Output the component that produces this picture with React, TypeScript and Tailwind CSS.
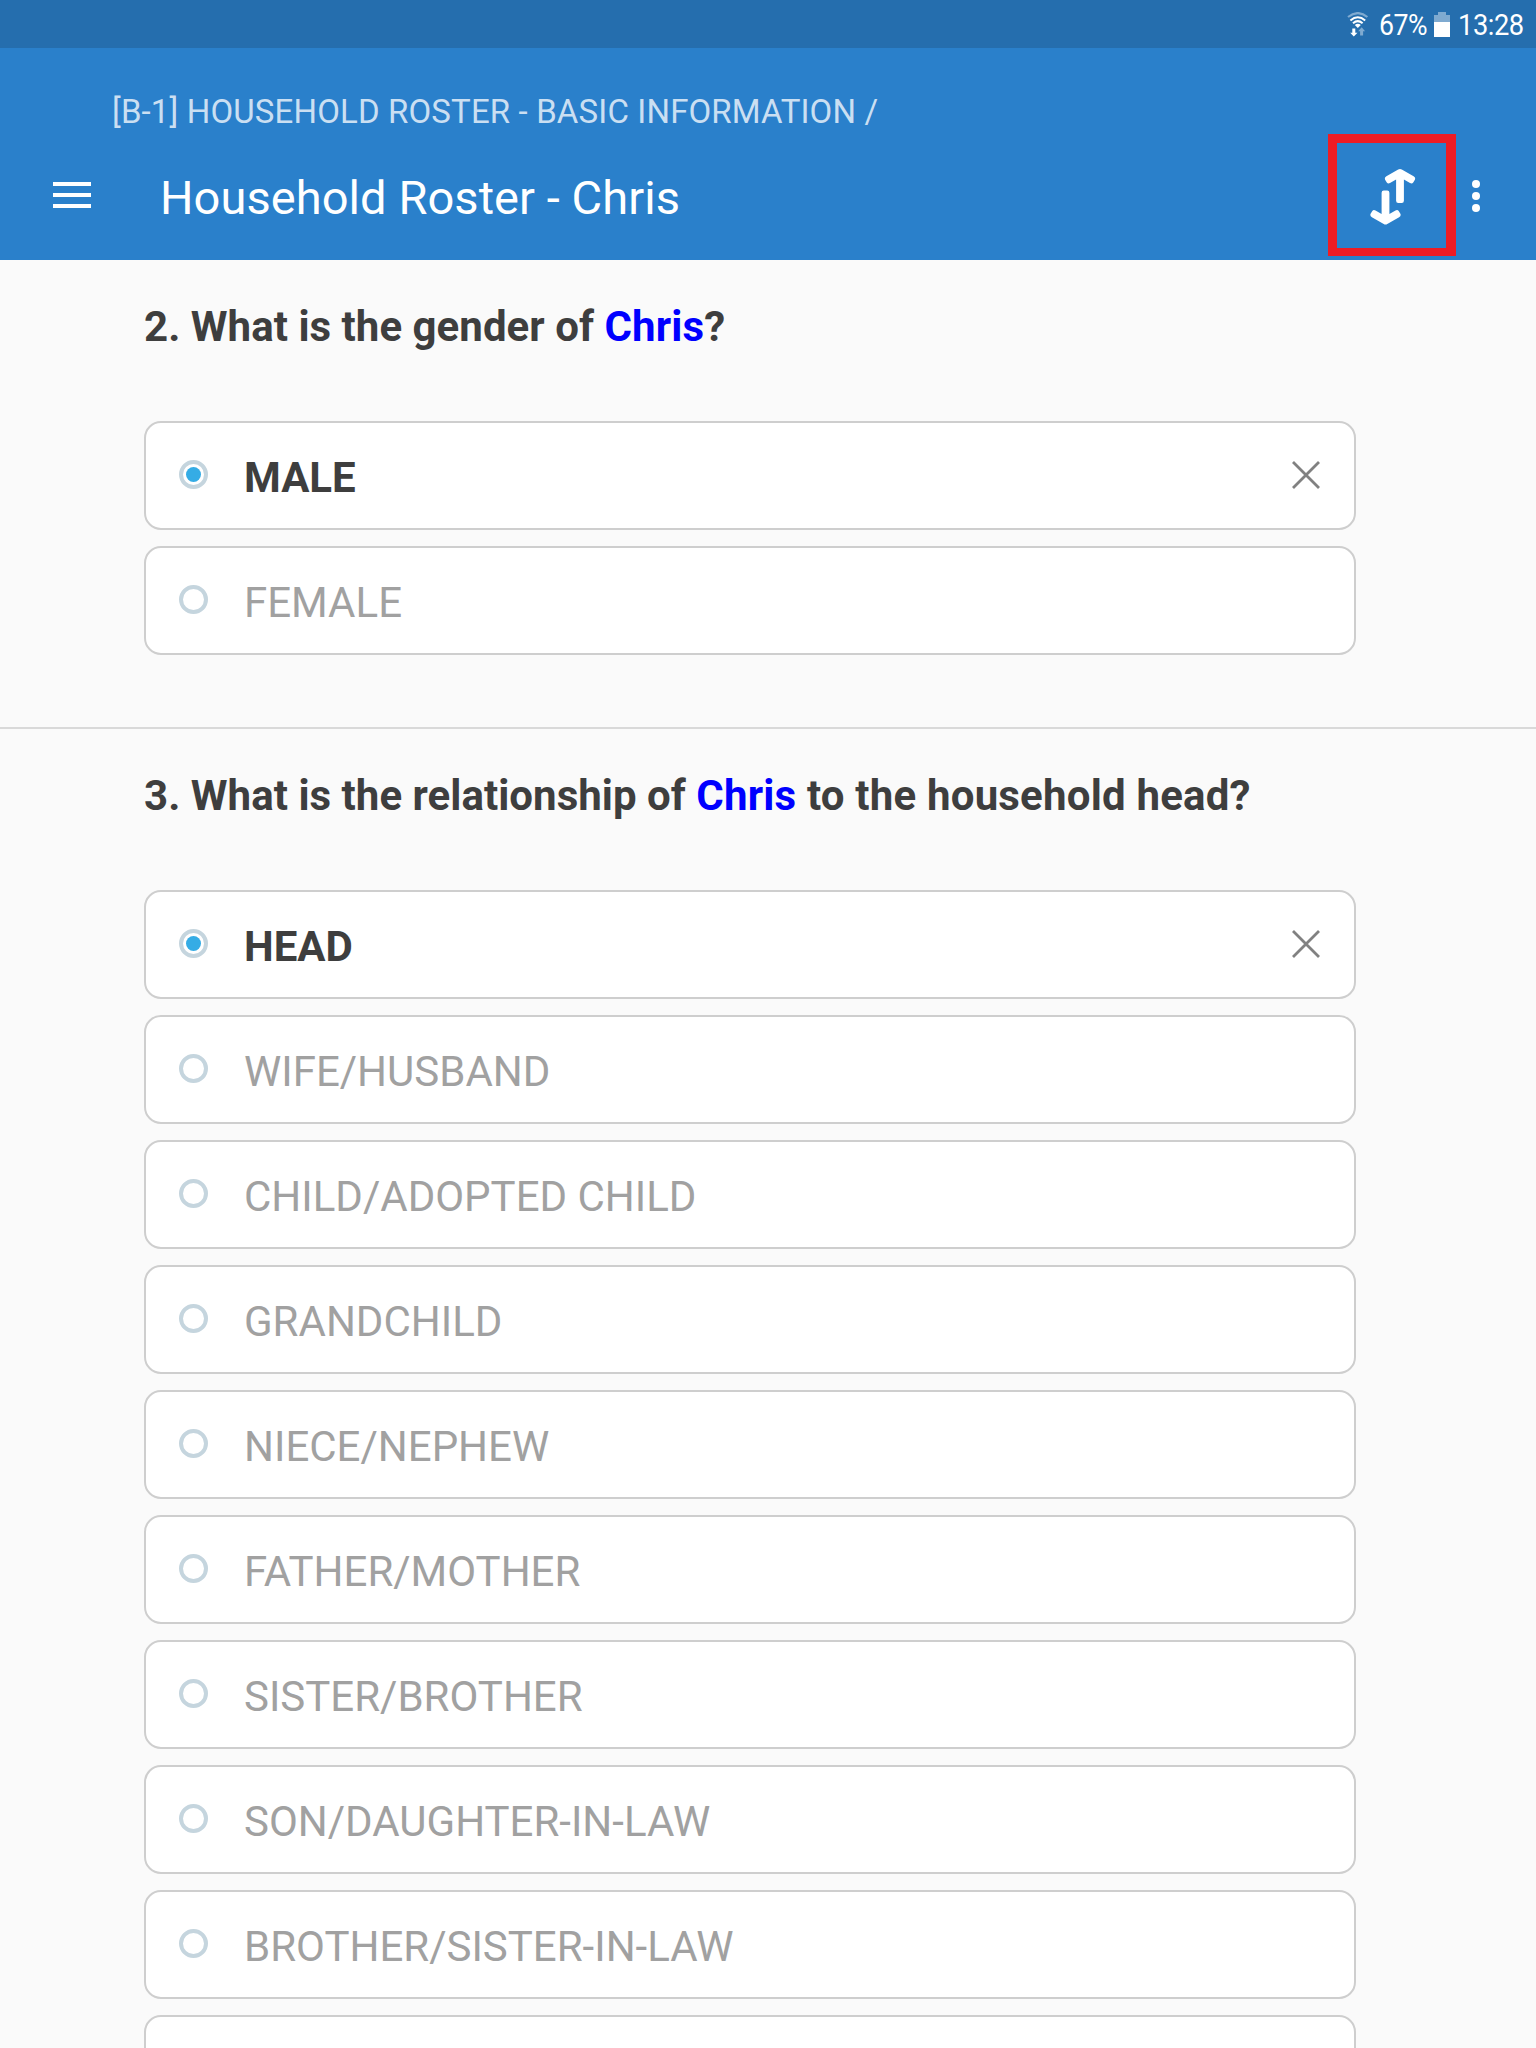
type Question = {
  number: number;
  before: string;
  after: string;
  options: string[];
  selected: string;
};

const questions: Question[] = [
  {
    number: 2,
    before: "What is the gender of ",
    after: "?",
    options: ["MALE", "FEMALE"],
    selected: "MALE",
  },
  {
    number: 3,
    before: "What is the relationship of ",
    after: " to the household head?",
    options: [
      "HEAD",
      "WIFE/HUSBAND",
      "CHILD/ADOPTED CHILD",
      "GRANDCHILD",
      "NIECE/NEPHEW",
      "FATHER/MOTHER",
      "SISTER/BROTHER",
      "SON/DAUGHTER-IN-LAW",
      "BROTHER/SISTER-IN-LAW",
      "",
    ],
    selected: "HEAD",
  },
];

const ARROW_PATH =
  "M28.2 .6Q30 -.5 31.8 .6L43.6 7.3Q45.8 8.6 44.9 10.7L43.2 13.6Q42 15.2 40 14.1L33.9 10.6V31.8Q33.9 34 31.7 34H28.3Q26.1 34 26.1 31.8V10.6L20 14.1Q18 15.2 16.8 13.6L15.1 10.7Q14.2 8.6 16.4 7.3Z";

function WifiIcon() {
  return (
    <svg width="22" height="25" viewBox="0 0 22 25" fill="none" stroke="#fff" strokeWidth="2">
      <path d="M1 5 Q11 -2.8 20.4 5" stroke="#7faad0" strokeWidth="2.2" />
      <path d="M3.4 8.4 Q10.8 2.2 18.2 8.4" />
      <path d="M6 11.2 Q10.8 7 15.6 11.2" />
      <path d="M7.8 13 Q10.8 10.6 13.8 13 L10.8 16 Z" fill="#fff" stroke="none" />
      <path d="M5.3 16.5h3v4.2h2.2L6.8 24.5 3.2 20.7h2.1z" fill="#fff" stroke="none" />
      <path d="M13.1 23.5h3v-4.2h2L14.7 15.3 11.1 19.3h2z" fill="#7faad0" stroke="none" />
    </svg>
  );
}

function BatteryIcon() {
  return (
    <svg width="16" height="25" viewBox="0 0 16 25">
      <path d="M0 10V3h4V0h8v3h4v7z" fill="#7faad0" />
      <path d="M0 10h16v15H0z" fill="#fff" />
    </svg>
  );
}

function SwapIcon() {
  return (
    <svg width="46" height="56" viewBox="0 0 46 56" fill="#fff">
      <path d={ARROW_PATH} />
      <path d={ARROW_PATH} transform="rotate(180 22.75 27.75)" />
    </svg>
  );
}

function Option({ label, selected }: { label: string; selected: boolean }) {
  return (
    <div className="flex h-[109px] shrink-0 items-center rounded-[17px] border-2 border-[#cecece] bg-white pr-[34px] pl-[33px]">
      <span className="mb-[2px] flex size-[29px] items-center justify-center rounded-full border-4 border-[#c5d5de]">
        {selected && <span className="size-[15px] shrink-0 rounded-full bg-[#35ace5]" />}
      </span>
      <span
        className={
          selected
            ? "ml-9 grow pt-1 text-[42px] leading-[50px] font-bold text-[#3e3e3e]"
            : "ml-9 grow pt-1 text-[42px] leading-[50px] text-[#a1a1a1]"
        }
      >
        {label}
      </span>
      {selected && (
        <svg width="28" height="28" viewBox="0 0 28 28" stroke="#818181" strokeWidth="2.8" className="mb-px">
          <path d="M1 1l26 26M27 1L1 27" />
        </svg>
      )}
    </div>
  );
}

export default function App() {
  return (
    <div className="flex h-[2048px] w-[1536px] flex-col overflow-hidden bg-[#fafafa] font-['Roboto',sans-serif]">
      <div className="flex h-12 shrink-0 items-center justify-end bg-[#256eae] text-white">
        <WifiIcon />
        <span className="ml-[10px] w-[51px] origin-left scale-x-[0.89] pt-[2px] text-[30px] leading-10 tracking-[-0.5px] whitespace-nowrap">
          67%
        </span>
        <span className="ml-1">
          <BatteryIcon />
        </span>
        <span className="ml-2 w-[78px] origin-left scale-x-[0.91] pt-[2px] text-[30px] leading-10 tracking-[-0.5px] whitespace-nowrap">
          13:28
        </span>
      </div>

      <header className="flex h-[212px] shrink-0 flex-col bg-[#2a80cb] pt-11 text-white">
        <div className="pl-28 text-[33px] leading-10 tracking-[0.14px] whitespace-pre text-[#cadff2]">
          [B-1] HOUSEHOLD ROSTER - BASIC INFORMATION /
        </div>
        <div className="mt-[2px] flex h-[122px] items-center">
          <div className="ml-[53px] flex w-[38px] flex-col gap-[7px]">
            <span className="h-1 bg-white" />
            <span className="h-1 bg-white" />
            <span className="h-1 bg-white" />
          </div>
          <h1 className="ml-[69px] grow pt-[5px] text-[47px] leading-[60px] tracking-[0.07px]">Household Roster - Chris</h1>
          <div className="flex h-[122px] w-[128px] items-center justify-center border-[9px] border-r-[10px] border-b-8 border-[#ee1c25] pt-[3px] pl-[3px]">
            <SwapIcon />
          </div>
          <div className="mr-14 ml-4 flex flex-col gap-1 pt-[2px]">
            <span className="size-2 rounded-full bg-white" />
            <span className="size-2 rounded-full bg-white" />
            <span className="size-2 rounded-full bg-white" />
          </div>
        </div>
      </header>

      <main className="flex flex-col">
        {questions.map((q) => (
          <section key={q.number} className="flex flex-col border-b-2 border-[#d9d9d9] pr-[180px] pb-[72px] pl-36">
            <h2 className="mt-[38px] mb-[65px] h-[58px] text-[42px] leading-[58px] font-bold tracking-[0.03px] whitespace-pre text-[#3e3e3e]">
              {q.number}. {q.before}
              <span className="tracking-[0.17px] text-[#0000ff]">Chris</span>
              <span className="tracking-[0.2px]">{q.after}</span>
            </h2>
            <div className="flex flex-col gap-4">
              {q.options.map((o) => (
                <Option key={o} label={o} selected={o === q.selected} />
              ))}
            </div>
          </section>
        ))}
      </main>
    </div>
  );
}
